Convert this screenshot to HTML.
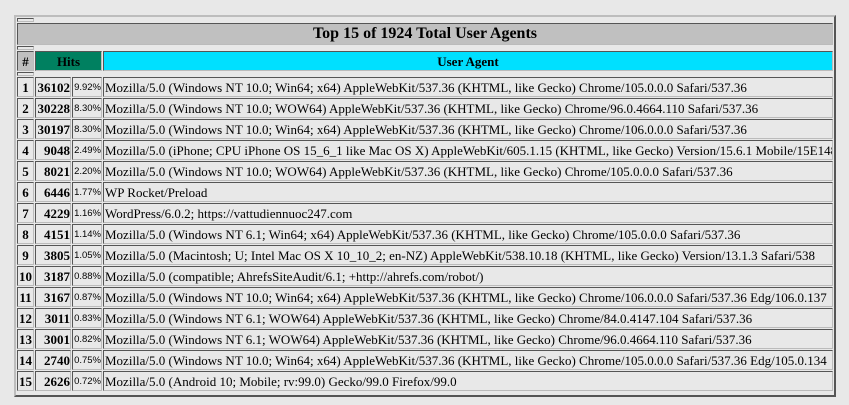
<!DOCTYPE html>
<html><head><meta charset="utf-8"><style>
body{margin:0;background:#e8e8e8;width:849px;height:405px;position:relative;overflow:hidden;font-family:"Liberation Serif",serif;}
.o{position:absolute;left:14px;top:15px;width:818px;height:378px;border:2px solid;border-color:#bdbdbd #555 #555 #bdbdbd;}
.c{position:absolute;box-sizing:border-box;border:1px solid;border-color:#555 #bbb #bbb #555;background:#e8e8e8;font-size:13px;line-height:19px;white-space:nowrap;overflow:hidden;color:#000}
.b{font-weight:bold;text-align:center}
.r{text-align:right;padding-right:0}
.p{font-family:"Liberation Sans",sans-serif;font-size:9.5px;text-align:right;padding-right:0}
.a{padding-left:1px}
</style></head><body>
<div class="o"></div>
<div class="c" style="left:17px;top:18px;width:17px;height:4px"></div>
<div class="c b" style="left:17px;top:23px;width:816px;height:22px;background:#c0c0c0;font-size:16px;line-height:20px">Top 15 of 1924 Total User Agents</div>
<div class="c" style="left:17px;top:46px;width:17px;height:4px"></div>
<div class="c b" style="left:17px;top:51px;width:17px;height:20px;background:#c0c0c0;font-size:13px">#</div>
<div class="c b" style="left:35px;top:51px;width:67px;height:20px;background:#008060;font-size:13px">Hits</div>
<div class="c b" style="left:103px;top:51px;width:730px;height:20px;background:#00e0ff;font-size:13px">User Agent</div>
<div class="c" style="left:17px;top:72px;width:17px;height:4px"></div>
<div id="rows"></div>
<script>
var d=[["36102","9.92%","Mozilla/5.0 (Windows NT 10.0; Win64; x64) AppleWebKit/537.36 (KHTML, like Gecko) Chrome/105.0.0.0 Safari/537.36"],
["30228","8.30%","Mozilla/5.0 (Windows NT 10.0; WOW64) AppleWebKit/537.36 (KHTML, like Gecko) Chrome/96.0.4664.110 Safari/537.36"],
["30197","8.30%","Mozilla/5.0 (Windows NT 10.0; Win64; x64) AppleWebKit/537.36 (KHTML, like Gecko) Chrome/106.0.0.0 Safari/537.36"],
["9048","2.49%","Mozilla/5.0 (iPhone; CPU iPhone OS 15_6_1 like Mac OS X) AppleWebKit/605.1.15 (KHTML, like Gecko) Version/15.6.1 Mobile/15E148"],
["8021","2.20%","Mozilla/5.0 (Windows NT 10.0; WOW64) AppleWebKit/537.36 (KHTML, like Gecko) Chrome/105.0.0.0 Safari/537.36"],
["6446","1.77%","WP Rocket/Preload"],
["4229","1.16%","WordPress/6.0.2; https://vattudiennuoc247.com"],
["4151","1.14%","Mozilla/5.0 (Windows NT 6.1; Win64; x64) AppleWebKit/537.36 (KHTML, like Gecko) Chrome/105.0.0.0 Safari/537.36"],
["3805","1.05%","Mozilla/5.0 (Macintosh; U; Intel Mac OS X 10_10_2; en-NZ) AppleWebKit/538.10.18 (KHTML, like Gecko) Version/13.1.3 Safari/538"],
["3187","0.88%","Mozilla/5.0 (compatible; AhrefsSiteAudit/6.1; +http://ahrefs.com/robot/)"],
["3167","0.87%","Mozilla/5.0 (Windows NT 10.0; Win64; x64) AppleWebKit/537.36 (KHTML, like Gecko) Chrome/106.0.0.0 Safari/537.36 Edg/106.0.137"],
["3011","0.83%","Mozilla/5.0 (Windows NT 6.1; WOW64) AppleWebKit/537.36 (KHTML, like Gecko) Chrome/84.0.4147.104 Safari/537.36"],
["3001","0.82%","Mozilla/5.0 (Windows NT 6.1; WOW64) AppleWebKit/537.36 (KHTML, like Gecko) Chrome/96.0.4664.110 Safari/537.36"],
["2740","0.75%","Mozilla/5.0 (Windows NT 10.0; Win64; x64) AppleWebKit/537.36 (KHTML, like Gecko) Chrome/105.0.0.0 Safari/537.36 Edg/105.0.134"],
["2626","0.72%","Mozilla/5.0 (Android 10; Mobile; rv:99.0) Gecko/99.0 Firefox/99.0"]];
var h="";
d.forEach(function(r,i){var t=77+i*21;
h+='<div class="c b" style="left:17px;top:'+t+'px;width:17px;height:20px">'+(i+1)+'</div>';
h+='<div class="c b r" style="left:35px;top:'+t+'px;width:36px;height:20px">'+r[0]+'</div>';
h+='<div class="c p" style="left:72px;top:'+t+'px;width:30px;height:20px">'+r[1]+'</div>';
h+='<div class="c a" style="left:103px;top:'+t+'px;width:730px;height:20px">'+r[2]+'</div>';});
document.getElementById("rows").innerHTML=h;
</script>
</body></html>
